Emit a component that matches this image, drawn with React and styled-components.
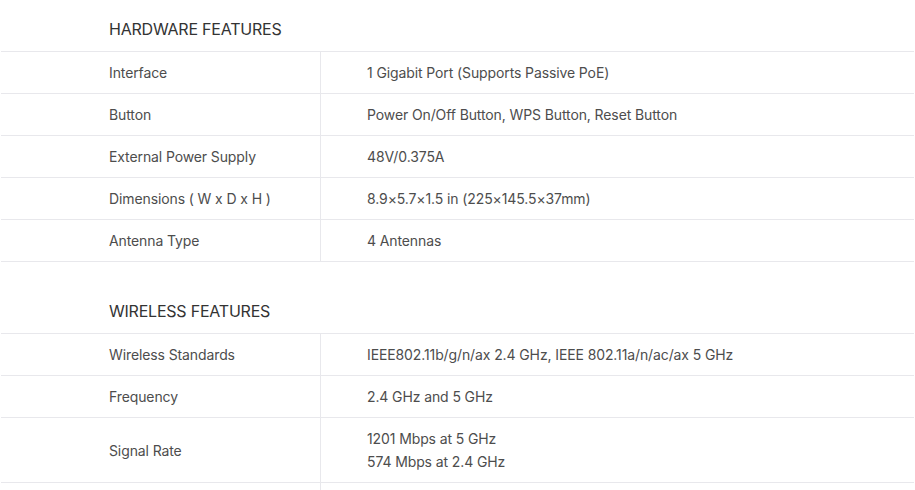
import styled, { createGlobalStyle } from "styled-components";

const GlobalStyle = createGlobalStyle`
  body {
    margin: 0;
    background: #fff;
    font-family: Inter, "Noto Sans", sans-serif;
  }
`;

const sections = [
  {
    title: "HARDWARE FEATURES",
    rows: [
      ["Interface", ["1 Gigabit Port (Supports Passive PoE)"]],
      ["Button", ["Power On/Off Button, WPS Button, Reset Button"]],
      ["External Power Supply", ["48V/0.375A"]],
      ["Dimensions ( W x D x H )", ["8.9×5.7×1.5 in (225×145.5×37mm)"]],
      ["Antenna Type", ["4 Antennas"]],
    ],
  },
  {
    title: "WIRELESS FEATURES",
    rows: [
      ["Wireless Standards", ["IEEE802.11b/g/n/ax 2.4 GHz, IEEE 802.11a/n/ac/ax 5 GHz"]],
      ["Frequency", ["2.4 GHz and 5 GHz"]],
      ["Signal Rate", ["1201 Mbps at 5 GHz", "574 Mbps at 2.4 GHz"]],
    ],
  },
];

const App = () => (
  <>
    <GlobalStyle />
    <Page>
      {sections.map((s, i) => (
        <Section key={s.title} $first={i === 0}>
          <Title>{s.title}</Title>
          {s.rows.map(([label, values]) => (
            <Row key={label}>
              <Label>{label}</Label>
              <Value>
                {values.map((v) => (
                  <div key={v}>{v}</div>
                ))}
              </Value>
            </Row>
          ))}
        </Section>
      ))}
      <Row>
        <Label />
        <Value />
      </Row>
    </Page>
  </>
);

export default App;

const Page = styled.div`
  margin: 0 1px;
  width: 913px;
`;

const Section = styled.section`
  margin-top: ${(p) => (p.$first ? "0" : "20px")};
`;

const Title = styled.h2`
  margin: 0;
  padding: 17px 0 10px 108px;
  font-size: 16px;
  font-weight: 400;
  line-height: 24px;
  letter-spacing: -0.22px;
  color: #333;
  border-bottom: 1px solid #e8e8ec;
`;

const Row = styled.div`
  display: grid;
  grid-template-columns: 320px 1fr;
  border-bottom: 1px solid #e8e8ec;
  font-size: 14px;
  line-height: 23px;
  letter-spacing: -0.11px;
  color: #4d4d4d;
`;

const Label = styled.div`
  display: flex;
  align-items: center;
  min-height: 23px;
  padding: 9px 0 9px 108px;
  border-right: 1px solid #e8e8ec;
`;

const Value = styled.div`
  padding: 9px 0 9px 46px;
`;
